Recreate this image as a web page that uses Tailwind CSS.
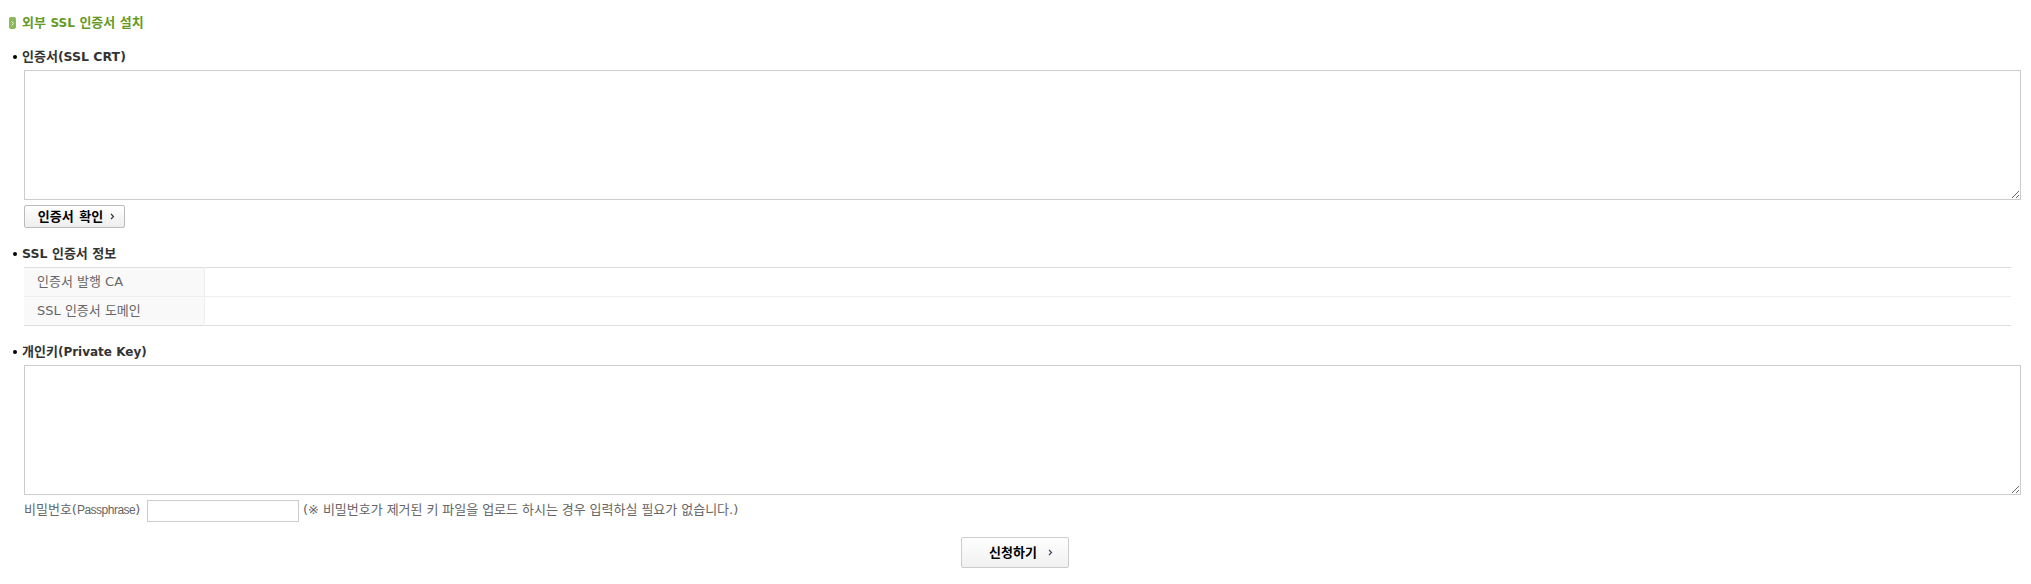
<!DOCTYPE html>
<html lang="ko">
<head>
    <meta charset="UTF-8">
    <title>외부 SSL 인증서 설치</title>
    <script src="https://cdn.jsdelivr.net/npm/@tailwindcss/browser@4"></script>
</head>
<body class="bg-white text-[13px] leading-[16px] text-[#666] font-['DejaVu_Sans','Noto_Sans_CJK_KR',sans-serif]">
    <div class="w-[2031px] h-[584px] overflow-hidden pl-[9px] pt-[15px]">
        <h1 class="flex items-center h-[16px] font-bold text-[#669a1f]">
            <span class="flex items-center justify-center w-[7px] h-[12px] rounded-[2px] bg-[#8cb85c] mr-[6px]">
                <svg width="3" height="5" viewBox="0 0 3 5"><path d="M0.5 0.5 2.5 2.5 0.5 4.5" fill="none" stroke="#e8f2d8" stroke-width="1"/></svg>
            </span>
            <span>외부 <span class="text-[12px]">SSL</span> 인증서 설치</span>
        </h1>

        <h2 class="flex items-center h-[16px] mt-[18px] font-bold text-[#333]">
            <span class="w-[4px] h-[4px] rounded-full bg-black ml-[4px] mr-[5px]"></span>
            <span>인증서<span class="text-[12.5px]">(SSL CRT)</span></span>
        </h2>
        <div class="ml-[15px] mt-[5px]">
            <textarea class="block w-[1997px] h-[130px] border border-[#ccc] bg-white"></textarea>
            <button class="flex items-center justify-center w-[101px] h-[23px] mt-[5px] pl-[4px] border border-[#bbb] rounded-[2px] bg-gradient-to-b from-white to-[#eee] font-bold text-black">
                <span class="[word-spacing:1px]">인증서 확인</span>
                <svg class="ml-[7px]" width="5" height="7" viewBox="0 0 5 7"><path d="M1 1 3.5 3.5 1 6" fill="none" stroke="#334" stroke-width="1.2"/></svg>
            </button>
        </div>

        <h2 class="flex items-center h-[16px] mt-[18px] font-bold text-[#333]">
            <span class="w-[4px] h-[4px] rounded-full bg-black ml-[4px] mr-[5px]"></span>
            <span><span class="text-[12.5px]">SSL</span> 인증서 정보</span>
        </h2>
        <table class="ml-[15px] mt-[5px] w-[1987px] border-y border-[#ddd] table-fixed">
            <tbody>
                <tr class="h-[29px] border-b border-[#eee]">
                    <th class="w-[180px] pl-[13px] bg-[#f9f9f9] border-r border-[#eee] text-left font-normal text-[#666]">인증서 발행 CA</th>
                    <td></td>
                </tr>
                <tr class="h-[29px]">
                    <th class="w-[180px] pl-[13px] bg-[#f9f9f9] border-r border-[#eee] text-left font-normal text-[#666]">SSL 인증서 도메인</th>
                    <td></td>
                </tr>
            </tbody>
        </table>

        <h2 class="flex items-center h-[16px] mt-[18px] font-bold text-[#333]">
            <span class="w-[4px] h-[4px] rounded-full bg-black ml-[4px] mr-[5px]"></span>
            <span>개인키<span class="text-[12px]">(Private Key)</span></span>
        </h2>
        <div class="ml-[15px] mt-[5px]">
            <textarea class="block w-[1997px] h-[130px] border border-[#ccc] bg-white"></textarea>
            <div class="flex items-center h-[22px] mt-[5px]">
                <span class="w-[123px] pb-[2px]">비밀번호(<span class="text-[12px] tracking-[-0.5px] font-['Liberation_Sans','Noto_Sans_CJK_KR',sans-serif]">Passphrase</span>)</span>
                <input type="password" class="w-[152px] h-[22px] border border-[#ccc] bg-white">
                <span class="ml-[4px] pb-[2px] [word-spacing:-0.2px]">(※ 비밀번호가 제거된 키 파일을 업로드 하시는 경우 입력하실 필요가 없습니다.)</span>
            </div>
        </div>

        <div class="flex justify-center w-[2011px] mt-[15px]">
            <button class="flex items-center justify-center w-[108px] h-[31px] border border-[#ccc] rounded-[2px] bg-gradient-to-b from-white to-[#f0f0f0] font-bold text-black">
                <span class="ml-[13px]">신청하기</span>
                <svg class="ml-[11px]" width="5" height="7" viewBox="0 0 5 7"><path d="M1 1 3.5 3.5 1 6" fill="none" stroke="#446" stroke-width="1.2"/></svg>
            </button>
        </div>
    </div>
</body>
</html>
